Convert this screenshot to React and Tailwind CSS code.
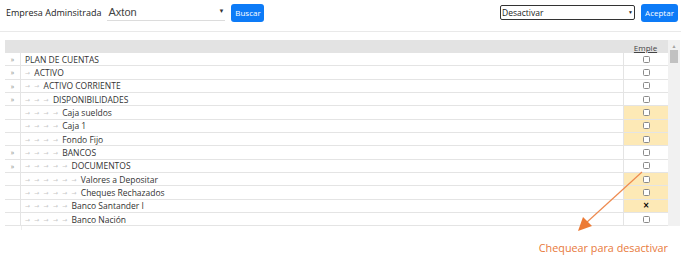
import React from "react";

const rows = [
  { t: "PLAN DE CUENTAS", d: 0, exp: true },
  { t: "ACTIVO", d: 1, exp: true },
  { t: "ACTIVO CORRIENTE", d: 2, exp: true },
  { t: "DISPONIBILIDADES", d: 3, exp: true },
  { t: "Caja sueldos", d: 4, y: true },
  { t: "Caja 1", d: 4, y: true },
  { t: "Fondo Fijo", d: 4, y: true },
  { t: "BANCOS", d: 4, exp: true },
  { t: "DOCUMENTOS", d: 5, exp: true },
  { t: "Valores a Depositar", d: 6, y: true },
  { t: "Cheques Rechazados", d: 6, y: true },
  { t: "Banco Santander I", d: 5, y: true, x: true },
  { t: "Banco Nación", d: 5 },
];

export default function App() {
  return (
    <div className="relative w-[693px] h-[257px] bg-white text-[#333]" style={{ fontFamily: '"Open Sans", "Noto Sans", sans-serif' }}>
      <div className="w-[681px] h-[32px] border-b border-[#e9e9e9] flex items-start">
        <span className="ml-[6px] mt-[7px] text-[9px] leading-[12px] text-[#222]">Empresa Adminsitrada</span>
        <div className="ml-[6px] mt-[3px] w-[118px] h-[18px] border-b border-[#dcdcdc] flex items-center justify-between">
          <span className="text-[11px] leading-[14px] text-[#444] pl-[1px]" style={{ fontFamily: '"Liberation Sans", Arial, sans-serif' }}>Axton</span>
          <span className="mr-[1px] text-[6px] text-[#333]">▼</span>
        </div>
        <button className="ml-[6px] mt-[4px] w-[33px] h-[18px] rounded-[3px] bg-[#0d7bf7] text-white text-[8px] leading-[18px]">Buscar</button>
        <div className="ml-auto mt-[5px] w-[135px] h-[15px] rounded-[2px] border-[1.5px] border-[#333] flex items-center justify-between">
          <span className="text-[8.5px] leading-[12px] text-[#222] pl-[1px]">Desactivar</span>
          <span className="text-[5px] mr-[1px] text-[#222]">▼</span>
        </div>
        <button className="ml-[6px] mt-[4px] mr-[3px] w-[37px] h-[18px] rounded-[3px] bg-[#0d7bf7] text-white text-[8px] leading-[18px]">Aceptar</button>
      </div>

      <div className="mt-[8px] ml-[5px] w-[676px] flex">
        <div className="w-[663px]">
          <div className="h-[13px] bg-[#e3e3e3] flex">
            <div className="flex-1" />
            <div className="w-[45px] text-center text-[8px] leading-[15px] text-[#444] underline">Emple</div>
          </div>
          {rows.map((r, i) => (
            <div key={i} className="h-[13.33px] flex border-b border-[#e4e4e4] text-[8.5px] leading-[13px]">
              <div className="w-[16px] border-r border-[#e4e4e4] text-center text-[#888] text-[7px]">{r.exp ? "»" : ""}</div>
              <div className="flex-1 pl-[4px] whitespace-nowrap text-[#333] flex items-center">
                {Array.from({ length: r.d }).map((_, k) => (
                  <span key={k} className="inline-block w-[9.3px] text-[#c8c8c8] text-[8px] leading-[13px]" style={{ fontFamily: '"DejaVu Sans", sans-serif', fontSize: "6px" }}>→</span>
                ))}
                <span>{r.t}</span>
              </div>
              <div className={`w-[45px] border-l border-[#e4e4e4] flex items-center justify-center ${r.y ? "bg-[#fde9b6]" : "bg-white"}`}>
                {r.x ? (
                  <span className="text-[8px] leading-[8px] font-bold text-black" style={{ fontFamily: '"DejaVu Sans", sans-serif' }}>×</span>
                ) : (
                  <span className="w-[7px] h-[7px] rounded-[1.5px] border border-[#8a8a8a] bg-white" />
                )}
              </div>
            </div>
          ))}
          <div className="h-[4px] w-[17px] border-r border-[#eee]" />
        </div>
        <div className="w-[12px] h-[186px] bg-[#f1f1f1] flex flex-col items-center">
          <span className="text-[5px] leading-[8px] mt-[2px] text-[#a3a3a3]">▲</span>
          <div className="w-[8px] h-[13px] bg-[#c1c1c1] mt-[0px]" />
        </div>
      </div>

      <div className="w-[681px] flex justify-end pr-[13px] mt-[11px]">
        <span className="text-[10.8px] leading-[14px] text-[#e8793b]">Chequear para desactivar</span>
      </div>

      <svg className="absolute left-0 top-0 pointer-events-none" width="693" height="257">
        <line x1="642" y1="172" x2="586" y2="223" stroke="#ee8a4f" strokeWidth="1.2" />
        <polygon points="578,231 583,217 592,226" fill="#ec7a35" />
      </svg>
    </div>
  );
}
